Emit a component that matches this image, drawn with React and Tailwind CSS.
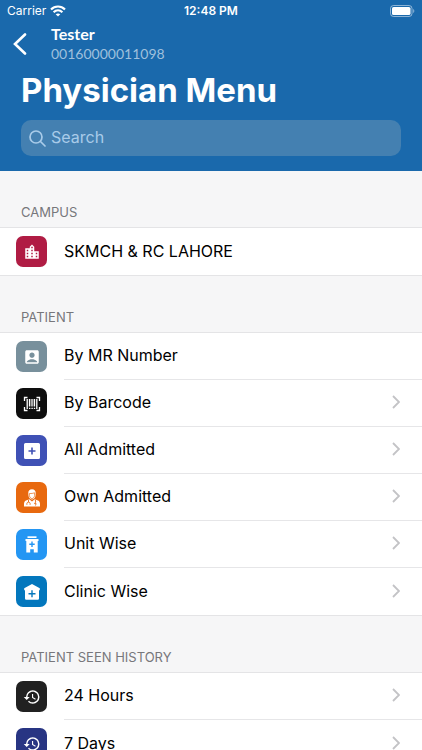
import React from "react";
import { MdAccountBox, MdHistory, MdLocationCity } from "react-icons/md";

function BarcodeIcon() {
  return (
    <svg viewBox="0 0 18 16" className="h-4 w-[18px]" fill="none" stroke="currentColor" aria-hidden="true">
      <path strokeWidth="1.300" d="M4.500 1.500H1.500V5M13.500 1.500h3V5M4.500 14.500H1.500V11M13.500 14.500h3V11" />
      <path strokeWidth="1.300" d="M4.200 3v10M13.800 3v10M9 3v7.500" />
      <path strokeWidth="1.500" d="M6.600 3v7.500M11.400 3v7.500" />
      <path strokeWidth="1.200" d="M6 12.300h1.400M8.400 12.300h1.400M10.800 12.300h1.400" />
    </svg>
  );
}

function PlusBoxIcon() {
  return (
    <svg viewBox="0 0 16 16" className="size-4" fill="currentColor" aria-hidden="true">
      <path
        fillRule="evenodd"
        d="M1.500 0h13A1.500 1.500 0 0 1 16 1.500v13a1.500 1.500 0 0 1-1.500 1.500h-13A1.500 1.500 0 0 1 0 14.500v-13A1.500 1.500 0 0 1 1.500 0zM7.200 4.500v2.700H4.500v1.600h2.700v2.700h1.600V8.800h2.700V7.200H8.800V4.500z"
      />
    </svg>
  );
}

function DoctorIcon() {
  return (
    <svg viewBox="0 0 16 18" className="h-[18px] w-4" aria-hidden="true">
      <path fill="currentColor" d="M4.300 4.800C4 1.800 5.500.3 8 .3s4 1.500 3.700 4.500L11.500 7C11 9 9.500 10.600 8 10.600S5 9 4.500 7z" />
      <path fill="none" stroke="#e8690f" strokeWidth=".7" d="M5.400 4.500c2 .2 3.600-.1 5.200-.7v2.700C10.400 8.300 9.200 9.600 8 9.600S5.600 8.300 5.400 6.500z" />
      <path fill="currentColor" d="M5.300 10.300 8 12.500l2.700-2.200 3.300 1.100c1.500.6 2 2 2 3.600v2.500H0V15c0-1.600.5-3 2-3.600z" />
      <path fill="none" stroke="#e8690f" strokeWidth=".9" d="M4.500 10.800v2.200M2.900 15.800v-1.300c0-1.800 3.200-1.800 3.200 0v1.300M11.300 10.800l.4 2.200-1.200 1.600h1.600l-.6 1.900" />
    </svg>
  );
}

function HospitalIcon() {
  return (
    <svg viewBox="0 0 14 17" className="h-[17px] w-3.5" fill="currentColor" aria-hidden="true">
      <path d="M2.500.3h9v1.700h-9z" />
      <path
        fillRule="evenodd"
        d="M.5 3h13v2h-.8v11.500H8.800V13.200H5.200v3.300H1.300V5H.5zM6.300 5.500v2H4.300v1.400h2v2h1.400v-2h2V7.500h-2v-2z"
      />
    </svg>
  );
}

function ClinicIcon() {
  return (
    <svg viewBox="0 0 16 16" className="size-4" fill="currentColor" aria-hidden="true">
      <path
        fillRule="evenodd"
        d="M8 0l7.800 4.200v2.100H15V14.500a1.200 1.200 0 0 1-1.200 1.200H2.200A1.200 1.200 0 0 1 1 14.500V6.300H.2V4.200zM7.300 6.200V9H4.500v1.400h2.800v2.800h1.400v-2.800h2.800V9H8.700V6.200z"
      />
    </svg>
  );
}

function Chevron() {
  return (
    <svg viewBox="0 0 8 14" className="h-3.5 w-2" fill="none" stroke="#c3c3c6" strokeWidth="1.800" aria-hidden="true">
      <path d="M1 1l6 6-6 6" />
    </svg>
  );
}

const sections = [
  {
    title: "CAMPUS",
    rows: [{ label: "SKMCH & RC LAHORE", tile: "bg-[#b01c44]", icon: <MdLocationCity className="size-[18px]" /> }],
  },
  {
    title: "PATIENT",
    rows: [
      { label: "By MR Number", tile: "bg-[#78909c]", icon: <MdAccountBox className="size-[18px]" /> },
      { label: "By Barcode", tile: "bg-[#0e0e0e]", icon: <BarcodeIcon />, more: true },
      { label: "All Admitted", tile: "bg-[#3f51b5]", icon: <PlusBoxIcon />, more: true },
      { label: "Own Admitted", tile: "bg-[#e8690f]", icon: <DoctorIcon />, more: true },
      { label: "Unit Wise", tile: "bg-[#2496f3]", icon: <HospitalIcon />, more: true },
      { label: "Clinic Wise", tile: "bg-[#0377bd]", icon: <ClinicIcon />, more: true },
    ],
  },
  {
    title: "PATIENT SEEN HISTORY",
    rows: [
      { label: "24 Hours", tile: "bg-[#212121]", icon: <MdHistory className="size-[18px]" />, more: true },
      { label: "7 Days", tile: "bg-[#283583]", icon: <MdHistory className="size-[18px]" />, more: true },
    ],
  },
];

function MenuRow({ row, last }) {
  return (
    <li>
      <button type="button" className="flex h-[47px] w-full items-center pl-4 text-left">
        <span className={`flex size-[31px] shrink-0 items-center justify-center rounded-[7px] text-white ${row.tile}`}>
          {row.icon}
        </span>
        <span
          className={`ml-[17px] flex h-full flex-1 items-center justify-between pr-[22px] pb-0.5 ${
            last ? "" : "border-b border-[#e6e6e8]"
          }`}
        >
          <span className="text-base text-black">{row.label}</span>
          {row.more && <Chevron />}
        </span>
      </button>
    </li>
  );
}

function StatusBar() {
  return (
    <div className="grid h-[22px] grid-cols-3 items-center px-[7px] text-xs">
      <div className="flex items-center gap-1">
        <span>Carrier</span>
        <svg viewBox="0 0 16 12" className="h-3 w-4" fill="none" stroke="currentColor" strokeWidth="2.200" aria-label="Wi-Fi">
          <path d="M1 4.500c4-4 10-4 14 0M3.600 7.300c2.600-2.500 6.200-2.500 8.800 0" />
          <path d="M8 11.600 5.700 9.300c1.300-1.200 3.300-1.200 4.600 0z" fill="currentColor" stroke="none" />
        </svg>
      </div>
      <span className="text-center font-semibold">12:48 PM</span>
      <svg viewBox="0 0 25 12" className="h-3 w-[25px] justify-self-end" aria-label="Battery full">
        <rect x=".5" y=".5" width="21.500" height="11" rx="3" fill="none" stroke="#fff" strokeOpacity=".5" />
        <rect x="2" y="2" width="18.500" height="8" rx="1.600" fill="#fff" />
        <path d="M23.200 4v4c1.500-.5 1.500-3.500 0-4z" fill="#fff" fillOpacity=".5" />
      </svg>
    </div>
  );
}

export default function App() {
  return (
    <div className="min-h-screen bg-[#f6f6f7] font-['Inter','Liberation_Sans',sans-serif]">
      <header className="bg-[#1a69ac] pb-[15px] text-white">
        <StatusBar />
        <div className="flex h-11 items-center pl-[13px]">
          <button type="button" aria-label="Back" className="mr-6">
            <svg viewBox="0 0 14 22" className="h-[22px] w-3.5" fill="none" stroke="currentColor" strokeWidth="2.600" strokeLinecap="round">
              <path d="M12 1.500 2 11l10 9.500" />
            </svg>
          </button>
          <div className="font-['Lato','Liberation_Sans',sans-serif]">
            <p className="text-base leading-5 font-bold">Tester</p>
            <p className="text-sm leading-5 text-[#9fc0dd]">00160000011098</p>
          </div>
        </div>
        <h1 className="px-[21px] pt-0.5 text-[33px] leading-[44px] font-bold">Physician Menu</h1>
        <label className="mx-[21px] mt-2 flex h-9 items-center gap-[5px] rounded-[10px] bg-[#4480b1] px-2">
          <svg viewBox="0 0 17 17" className="size-[17px] shrink-0" fill="none" stroke="#a9cbe9" strokeWidth="1.700" strokeLinecap="round" aria-hidden="true">
            <circle cx="7" cy="7" r="6" />
            <path d="M11.500 11.500 16 16" />
          </svg>
          <input
            type="text"
            aria-label="Search"
            placeholder="Search"
            className="h-full min-w-0 flex-1 bg-transparent pb-0.5 text-base outline-none placeholder:text-[#a9cbe9]"
          />
        </label>
      </header>
      <main>
        {sections.map((section) => (
          <section key={section.title}>
            <h2 className="flex h-14 items-end px-[21px] pb-[5px] text-[13px] leading-5 text-[#77777b]">{section.title}</h2>
            <ul className="border-y border-[#e4e4e6] bg-white">
              {section.rows.map((row, i) => (
                <MenuRow key={row.label} row={row} last={i === section.rows.length - 1} />
              ))}
            </ul>
          </section>
        ))}
      </main>
    </div>
  );
}
